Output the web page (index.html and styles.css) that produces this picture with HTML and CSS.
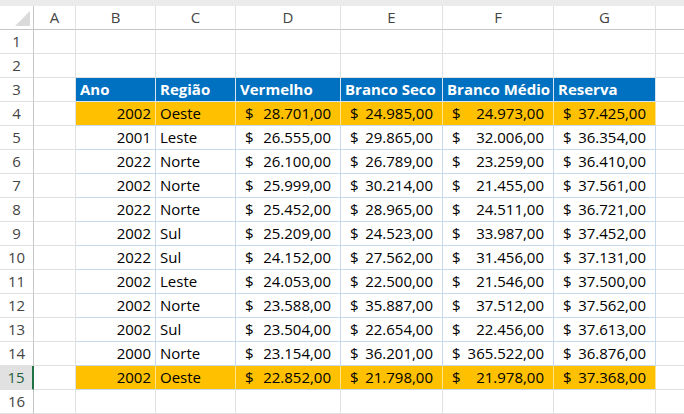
FILE: index.html
```html
<!DOCTYPE html>
<html lang="pt">
<head>
<meta charset="utf-8">
<title>Planilha</title>
<link rel="stylesheet" href="styles.css">
</head>
<body>
<div class="sheet">
  <div class="topstrip"></div>
  <div class="row colhead">
    <div class="corner"><span class="tri"></span></div>
    <div class="ch">A</div><div class="ch">B</div><div class="ch">C</div><div class="ch">D</div><div class="ch">E</div><div class="ch">F</div><div class="ch">G</div><div class="ch last"></div>
  </div>
  <div class="row"><div class="rh">1</div><div class="c"></div><div class="c"></div><div class="c"></div><div class="c"></div><div class="c"></div><div class="c"></div><div class="c"></div><div class="c last"></div></div>
  <div class="row"><div class="rh">2</div><div class="c"></div><div class="c"></div><div class="c"></div><div class="c"></div><div class="c"></div><div class="c"></div><div class="c"></div><div class="c last"></div></div>
  <div class="row"><div class="rh">3</div><div class="c"></div>
    <div class="c th">Ano</div><div class="c th">Região</div><div class="c th">Vermelho</div><div class="c th">Branco Seco</div><div class="c th">Branco Médio</div><div class="c th">Reserva</div><div class="c last"></div></div>

  <div class="row"><div class="rh">4</div><div class="c"></div>
    <div class="c td yl num">2002</div><div class="c td yl">Oeste</div>
    <div class="c td yl acc"><span>$</span><span>28.701,00</span></div>
    <div class="c td yl acc"><span>$</span><span>24.985,00</span></div>
    <div class="c td yl acc"><span>$</span><span>24.973,00</span></div>
    <div class="c td yl acc"><span>$</span><span>37.425,00</span></div>
    <div class="c last"></div></div>

  <div class="row"><div class="rh">5</div><div class="c"></div>
    <div class="c td num">2001</div><div class="c td">Leste</div>
    <div class="c td acc"><span>$</span><span>26.555,00</span></div>
    <div class="c td acc"><span>$</span><span>29.865,00</span></div>
    <div class="c td acc"><span>$</span><span>32.006,00</span></div>
    <div class="c td acc"><span>$</span><span>36.354,00</span></div>
    <div class="c last"></div></div>

  <div class="row"><div class="rh">6</div><div class="c"></div>
    <div class="c td num">2022</div><div class="c td">Norte</div>
    <div class="c td acc"><span>$</span><span>26.100,00</span></div>
    <div class="c td acc"><span>$</span><span>26.789,00</span></div>
    <div class="c td acc"><span>$</span><span>23.259,00</span></div>
    <div class="c td acc"><span>$</span><span>36.410,00</span></div>
    <div class="c last"></div></div>

  <div class="row"><div class="rh">7</div><div class="c"></div>
    <div class="c td num">2002</div><div class="c td">Norte</div>
    <div class="c td acc"><span>$</span><span>25.999,00</span></div>
    <div class="c td acc"><span>$</span><span>30.214,00</span></div>
    <div class="c td acc"><span>$</span><span>21.455,00</span></div>
    <div class="c td acc"><span>$</span><span>37.561,00</span></div>
    <div class="c last"></div></div>

  <div class="row"><div class="rh">8</div><div class="c"></div>
    <div class="c td num">2022</div><div class="c td">Norte</div>
    <div class="c td acc"><span>$</span><span>25.452,00</span></div>
    <div class="c td acc"><span>$</span><span>28.965,00</span></div>
    <div class="c td acc"><span>$</span><span>24.511,00</span></div>
    <div class="c td acc"><span>$</span><span>36.721,00</span></div>
    <div class="c last"></div></div>

  <div class="row"><div class="rh">9</div><div class="c"></div>
    <div class="c td num">2002</div><div class="c td">Sul</div>
    <div class="c td acc"><span>$</span><span>25.209,00</span></div>
    <div class="c td acc"><span>$</span><span>24.523,00</span></div>
    <div class="c td acc"><span>$</span><span>33.987,00</span></div>
    <div class="c td acc"><span>$</span><span>37.452,00</span></div>
    <div class="c last"></div></div>

  <div class="row"><div class="rh">10</div><div class="c"></div>
    <div class="c td num">2022</div><div class="c td">Sul</div>
    <div class="c td acc"><span>$</span><span>24.152,00</span></div>
    <div class="c td acc"><span>$</span><span>27.562,00</span></div>
    <div class="c td acc"><span>$</span><span>31.456,00</span></div>
    <div class="c td acc"><span>$</span><span>37.131,00</span></div>
    <div class="c last"></div></div>

  <div class="row"><div class="rh">11</div><div class="c"></div>
    <div class="c td num">2002</div><div class="c td">Leste</div>
    <div class="c td acc"><span>$</span><span>24.053,00</span></div>
    <div class="c td acc"><span>$</span><span>22.500,00</span></div>
    <div class="c td acc"><span>$</span><span>21.546,00</span></div>
    <div class="c td acc"><span>$</span><span>37.500,00</span></div>
    <div class="c last"></div></div>

  <div class="row"><div class="rh">12</div><div class="c"></div>
    <div class="c td num">2002</div><div class="c td">Norte</div>
    <div class="c td acc"><span>$</span><span>23.588,00</span></div>
    <div class="c td acc"><span>$</span><span>35.887,00</span></div>
    <div class="c td acc"><span>$</span><span>37.512,00</span></div>
    <div class="c td acc"><span>$</span><span>37.562,00</span></div>
    <div class="c last"></div></div>

  <div class="row"><div class="rh">13</div><div class="c"></div>
    <div class="c td num">2002</div><div class="c td">Sul</div>
    <div class="c td acc"><span>$</span><span>23.504,00</span></div>
    <div class="c td acc"><span>$</span><span>22.654,00</span></div>
    <div class="c td acc"><span>$</span><span>22.456,00</span></div>
    <div class="c td acc"><span>$</span><span>37.613,00</span></div>
    <div class="c last"></div></div>

  <div class="row"><div class="rh">14</div><div class="c"></div>
    <div class="c td num">2000</div><div class="c td">Norte</div>
    <div class="c td acc"><span>$</span><span>23.154,00</span></div>
    <div class="c td acc"><span>$</span><span>36.201,00</span></div>
    <div class="c td acc"><span>$</span><span>365.522,00</span></div>
    <div class="c td acc"><span>$</span><span>36.876,00</span></div>
    <div class="c last"></div></div>

  <div class="row"><div class="rh sel">15</div><div class="c"></div>
    <div class="c td yl num">2002</div><div class="c td yl">Oeste</div>
    <div class="c td yl acc"><span>$</span><span>22.852,00</span></div>
    <div class="c td yl acc"><span>$</span><span>21.798,00</span></div>
    <div class="c td yl acc"><span>$</span><span>21.978,00</span></div>
    <div class="c td yl acc"><span>$</span><span>37.368,00</span></div>
    <div class="c last"></div></div>

  <div class="row"><div class="rh">16</div><div class="c"></div><div class="c"></div><div class="c"></div><div class="c"></div><div class="c"></div><div class="c"></div><div class="c"></div><div class="c last"></div></div>
</div>
</body>
</html>
```
FILE: styles.css
```css
* { box-sizing: border-box; }
html, body { margin: 0; padding: 0; background: #ffffff; }
body {
  font-family: "Open Sans", "Noto Sans", sans-serif;
  font-size: 15px;
  color: #000;
  width: 684px;
  height: 414px;
  overflow: hidden;
}
.sheet { width: 684px; }
.topstrip { height: 6px; background: #ebebeb; }
.row {
  display: grid;
  grid-template-columns: 34px 42px 80px 80px 105px 102px 111px 102px 1fr;
  height: 24px;
}
.row > div {
  border-right: 1px solid #e1e1e1;
  border-bottom: 1px solid #e1e1e1;
  line-height: 22px;
  white-space: nowrap;
  overflow: hidden;
}
.colhead > div {
  background: #ffffff;
  border-bottom: 1px solid #c6c6c6;
  border-right: 1px solid #e1e1e1;
  text-align: center;
  color: #444;
}
.colhead .corner {
  position: relative;
  border-right: 1px solid #c6c6c6;
}
.corner .tri {
  position: absolute;
  right: 3px;
  bottom: 3px;
  width: 0;
  height: 0;
  border-left: 15px solid transparent;
  border-bottom: 15px solid #dadada;
}
.colhead .last { border-right: none; }
.row > .rh {
  border-right: 1px solid #c6c6c6;
  border-bottom: 1px solid #e1e1e1;
  text-align: center;
  color: #444;
  background: #ffffff;
}
.row > .rh.sel {
  background: #e1e1e1;
  border-right: 2px solid #217346;
  color: #1f5f3d;
}
.row > .last { border-right: none; }
.row > .th {
  background: #0070c0;
  color: #ffffff;
  font-weight: 700;
  padding-left: 4px;
  border-right: 1px solid #d6e4f2;
  border-bottom: 1px solid #d6e4f2;
}
.row > .td {
  border-right: 1px solid #c8d9ec;
  border-bottom: 1px solid #c8d9ec;
  padding: 0 4px;
}
.row > .yl {
  background: #ffc000;
  border-right-color: #ffe38f;
  border-bottom-color: #c8d9ec;
}
.num { text-align: right; padding-right: 4px; }
.row > .acc {
  display: flex;
  justify-content: space-between;
  padding-left: 9px;
  padding-right: 9px;
}
```
